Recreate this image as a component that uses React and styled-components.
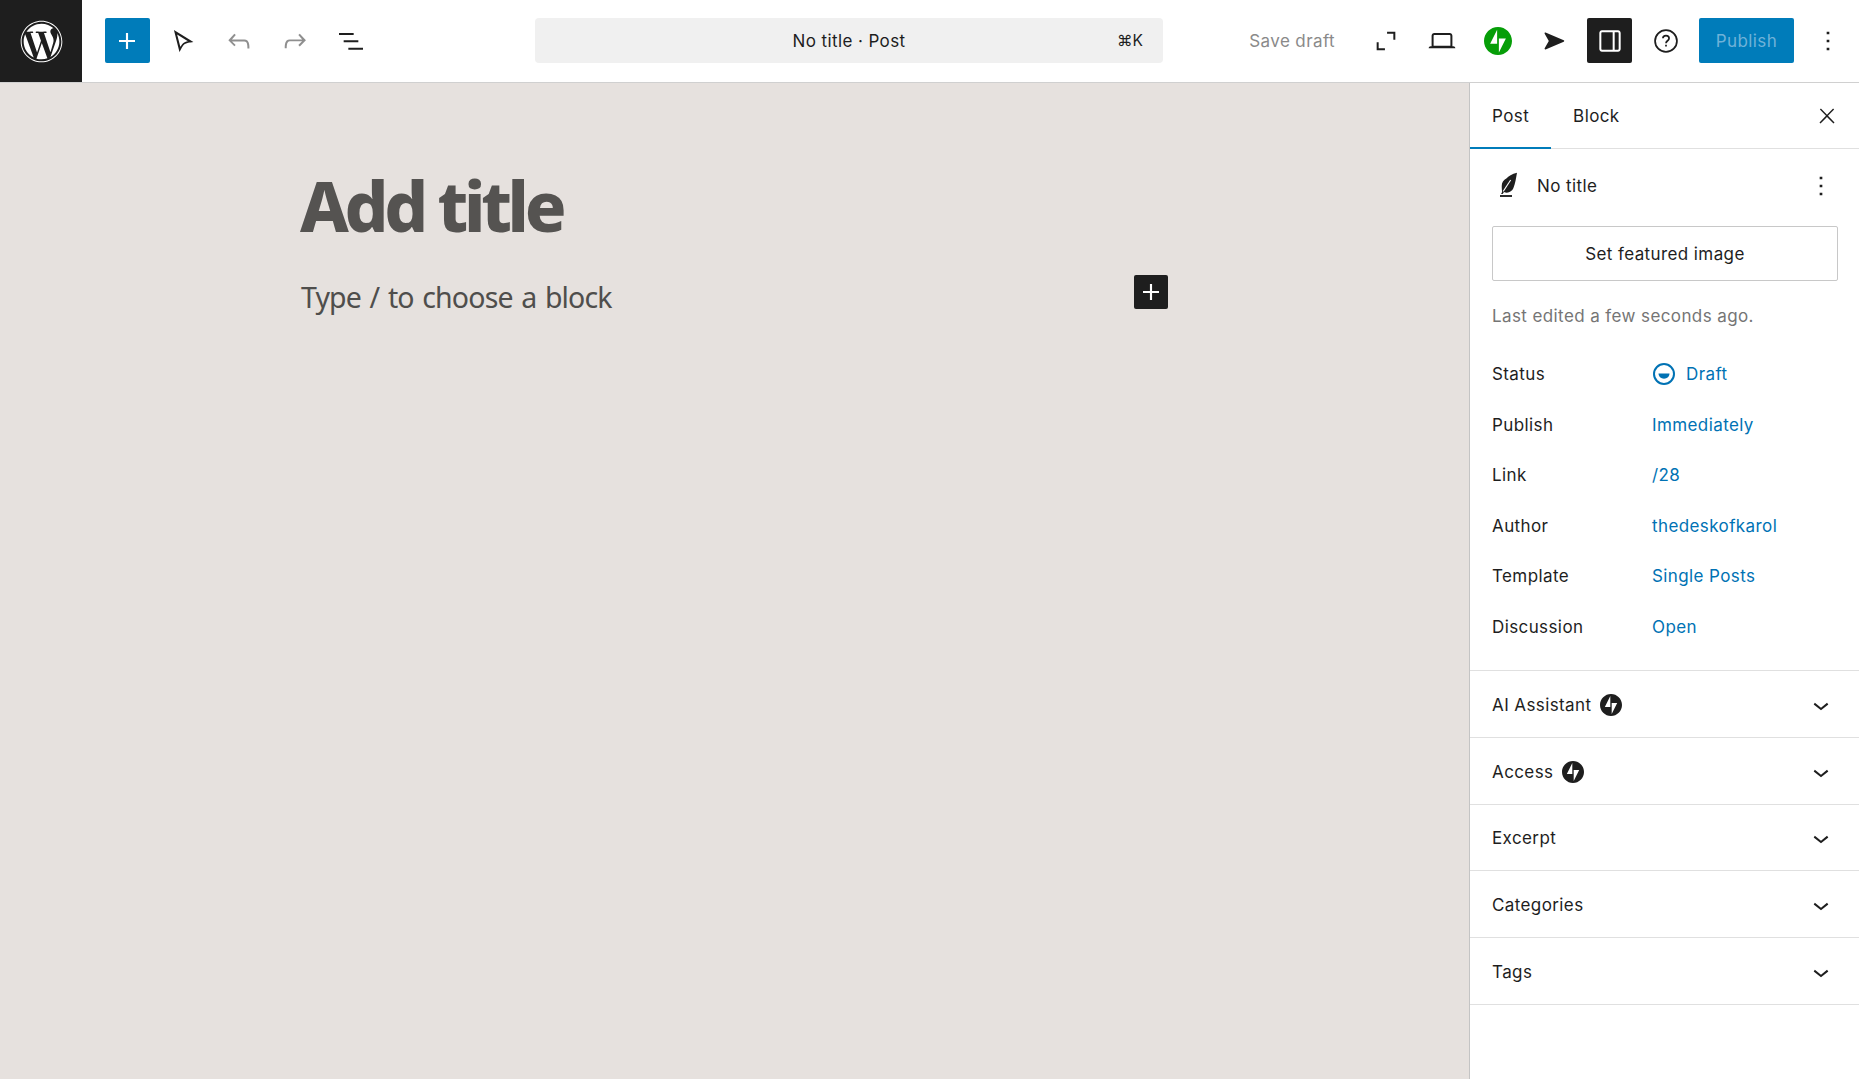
import React from "react";
import styled, { createGlobalStyle } from "styled-components";
import { FaWordpress } from "react-icons/fa";

const GlobalStyle = createGlobalStyle`
  html, body {
    margin: 0;
    padding: 0;
    height: 100%;
    background: #fff;
    font-family: Inter, "Liberation Sans", sans-serif;
    color: #1e1e1e;
  }
  * { box-sizing: border-box; }
`;

const Page = styled.div`
  width: 1859px;
  height: 1079px;
  display: flex;
  flex-direction: column;
  overflow: hidden;
  font-size: 17px;
  letter-spacing: 0.4px;
`;

const TopBar = styled.header`
  height: 83px;
  flex: none;
  display: flex;
  align-items: flex-start;
  justify-content: space-between;
  background: #fff;
  border-bottom: 1px solid #d0d0d0;
  padding-right: 9px;
`;

const ToolGroup = styled.div`
  height: 81px;
  display: flex;
  align-items: center;
  gap: 11px;
`;

const LogoTile = styled.div`
  align-self: flex-start;
  width: 82px;
  height: 82px;
  margin-right: 11.5px;
  background: #1e1e1e;
  color: #fff;
  display: flex;
  align-items: center;
  justify-content: center;
  font-size: 43px;
`;

const IconButton = styled.button`
  width: 45px;
  height: 45px;
  padding: 0;
  border: 0;
  border-radius: 2px;
  display: flex;
  align-items: center;
  justify-content: center;
  background: ${(p) => (p.$fill ? p.$fill : "transparent")};
  color: ${(p) => p.$color || "#1e1e1e"};
`;

const CommandBar = styled.div`
  position: absolute;
  left: 535px;
  top: 18px;
  width: 628px;
  height: 45px;
  border-radius: 4px;
  background: #f0f0f0;
  display: flex;
  align-items: center;
  justify-content: center;
`;

const Shortcut = styled.span`
  position: absolute;
  right: 20px;
  font-size: 15.5px;
  letter-spacing: 0;
`;

const SaveDraft = styled.span`
  color: #8a8a8a;
  margin-right: 17px;
`;

const PublishButton = styled.button`
  width: 95px;
  height: 45px;
  border: 0;
  border-radius: 2px;
  background: #007cba;
  color: #6fb2d8;
  font: inherit;
  letter-spacing: inherit;
  padding: 0;
`;

const Body = styled.div`
  flex: 1;
  display: flex;
  min-height: 0;
`;

const Canvas = styled.main`
  flex: 1;
  background: #e6e1de;
`;

const Column = styled.div`
  width: 869px;
  margin: 82px auto 0;
`;

const Title = styled.h1`
  margin: 0;
  font-family: "Noto Sans", sans-serif;
  font-weight: 800;
  font-size: 69px;
  line-height: 80px;
  letter-spacing: -4.3px;
  color: #555351;
`;

const BlockRow = styled.div`
  display: flex;
  justify-content: space-between;
  align-items: flex-start;
  margin-top: 30px;
`;

const Placeholder = styled.p`
  margin: 2px 0 0 1px;
  font-family: "Noto Sans", sans-serif;
  font-size: 28.5px;
  line-height: 40px;
  letter-spacing: -0.85px;
  word-spacing: 2px;
  color: #4f4e4c;
`;

const InserterButton = styled.button`
  width: 34px;
  height: 34px;
  padding: 0;
  margin-right: 1px;
  border: 0;
  border-radius: 2px;
  background: #1e1e1e;
  color: #fff;
  display: flex;
  align-items: center;
  justify-content: center;
`;

const Sidebar = styled.aside`
  width: 390px;
  flex: none;
  background: #fff;
  border-left: 1px solid #c4c4c4;
`;

const TabBar = styled.div`
  height: 66px;
  display: flex;
  align-items: stretch;
  border-bottom: 1px solid #e0e0e0;
  padding-right: 10px;
`;

const Tab = styled.div`
  padding: 0 22px;
  display: flex;
  align-items: center;
  box-shadow: ${(p) => (p.$active ? "inset 0 -2px 0 #007cba" : "none")};
  margin-bottom: -1px;
`;

const TabClose = styled.div`
  margin-left: auto;
  display: flex;
  align-items: center;
`;

const SummaryPanel = styled.section`
  padding: 0 22px 18px;
  border-bottom: 1px solid #e0e0e0;
`;

const PostHeading = styled.div`
  height: 77px;
  display: flex;
  align-items: center;
  padding-bottom: 3px;
`;

const PostName = styled.span`
  margin-left: 13px;
  flex: 1;
`;

const FeaturedButton = styled.button`
  display: block;
  width: 346px;
  height: 55px;
  padding: 0;
  border: 1px solid #c8c8c8;
  border-radius: 2px;
  background: #fff;
  color: #1e1e1e;
  font: inherit;
  letter-spacing: inherit;
`;

const LastEdited = styled.p`
  margin: 25px 0 23px;
  line-height: 20px;
  color: #757575;
`;

const MetaRow = styled.div`
  height: 50.5px;
  display: flex;
  align-items: center;
`;

const MetaLabel = styled.span`
  width: 160px;
  flex: none;
`;

const MetaValue = styled.span`
  display: flex;
  align-items: center;
  gap: 10px;
  color: #0072b4;
`;

const AccordionRow = styled.div`
  height: 66.8px;
  padding: 2px 22px 0;
  display: flex;
  align-items: center;
  gap: 9px;
  border-bottom: 1px solid #e0e0e0;
`;

const AccordionChevron = styled.span`
  margin-left: auto;
  display: flex;
`;

const Icon = ({ d, size = 32, box = 24, fill = "currentColor" }) => (
  <svg width={size} height={size} viewBox={`0 0 ${box} ${box}`} fill={fill} aria-hidden="true">
    <path d={d} />
  </svg>
);

const paths = {
  plus: "M18 11.2h-5.2V6h-1.6v5.2H6v1.6h5.2V18h1.6v-5.2H18z",
  select:
    "M9.4 20.5L5.2 3.8l14.6 9-2 .3c-.2 0-.4.1-.7.1-.9.2-1.6.3-2.2.5-.8.3-1.4.5-1.8.8-.4.3-.8.8-1.3 1.5-.4.5-.8 1.2-1.2 2l-.3.6-.8 1.4zM7.6 7.1l2.4 9.3c.2-.4.5-.8.7-1.1.6-.8 1.1-1.4 1.6-1.8.5-.4 1.3-.8 2.2-1.1l1.2-.3-8.1-5z",
  undo: "M18.3 11.7c-.6-.6-1.4-.9-2.3-.9H6.7l2.9-3.3-1.1-1-4.5 5L8.5 16l1-1-2.7-2.7H16c.5 0 .9.2 1.3.5 1 1 1 3.4 1 4.5v.3h1.5v-.2c0-1.5 0-4.3-1.5-5.7z",
  redo: "M15.6 6.5l-1.1 1 2.9 3.3H8c-.9 0-1.7.3-2.3.9-1.4 1.5-1.4 4.2-1.4 5.6v.2h1.5v-.3c0-1.1 0-3.5 1-4.5.3-.3.7-.5 1.3-.5h9.2L14.5 15l1.1 1.1 4.6-4.6-4.6-5z",
  list: "M3 6h11v1.5H3V6zm3.5 5.5h11V13h-11v-1.5zM21 17H10v1.5h11V17z",
  fullscreen: "M12.8 5H19v6h-1.5V6.5h-4.7zM5 13h1.5v4.5h4.7V19H5z",
  laptop:
    "M20.5 16h-.7V8c0-1.1-.9-2-2-2H6.2c-1.1 0-2 .9-2 2v8h-.7c-.8 0-1.5.7-1.5 1.5h20c0-.8-.7-1.5-1.5-1.5zM5.7 8c0-.3.2-.5.5-.5h11.6c.3 0 .5.2.5.5v7.6H5.7V8z",
  jetpack: "M16 0C7.2 0 0 7.2 0 16s7.2 16 16 16 16-7.2 16-16S24.8 0 16 0zM15 19H7l8-16v16zm2 10V13h8l-8 16z",
  send: "M4.2 4.2c-.6-.2-1.1.4-.8 1L7.2 12l-3.8 6.8c-.3.6.2 1.2.8 1L21 12.6c.6-.2.6-1 0-1.2z",
  sidebar:
    "M18 4H6c-1.1 0-2 .9-2 2v12c0 1.1.9 2 2 2h12c1.1 0 2-.9 2-2V6c0-1.1-.9-2-2-2zm-4 14.5H6c-.3 0-.5-.2-.5-.5V6c0-.3.2-.5.5-.5h8v13zm4.5-.5c0 .3-.2.5-.5.5h-2.5v-13H18c.3 0 .5.2.5.5v12z",
  more: "M13 19h-2v-2h2v2zm0-6h-2v-2h2v2zm0-6h-2V5h2v2z",
  close: "M13 11.8l6.1-6.3-1-1-6.1 6.2-6.1-6.2-1 1 6.1 6.3-6.5 6.7 1 1 6.5-6.6 6.5 6.6 1-1z",
  chevron: "M17.5 11.6L12 16l-5.5-4.4.9-1.2L12 14l4.5-3.6 1 1.2z",
};

const HelpIcon = () => (
  <svg width="32" height="32" viewBox="0 0 24 24" fill="none" stroke="currentColor" strokeWidth="1.3" aria-hidden="true">
    <circle cx="12" cy="12" r="8.2" />
    <path d="M9.7 10c0-1.4 1-2.1 2.3-2.1s2.3.8 2.3 2c0 1.9-2.3 1.9-2.3 3.8" />
    <path d="M12 14.8v1.4" />
  </svg>
);

const FeatherIcon = () => (
  <svg width="32" height="32" viewBox="0 0 24 24" aria-hidden="true">
    <path
      d="M18.75 2C15 3 12.2 4.5 11 6.2 8.5 7.5 7.3 9.5 7.3 12c0 2 .2 3.5.3 4.5L6.8 18H8l1-1.5c3 1.5 6-.5 7-2.8 1.5-3.7 2-7.7 2.75-11.7z"
      fill="currentColor"
    />
    <path d="M8.4 16L14 7.5" stroke="#fff" strokeWidth="0.8" fill="none" />
    <path d="M6 18.8h9v1.4H6z" fill="currentColor" />
  </svg>
);

const DraftIcon = () => (
  <svg width="24" height="24" viewBox="0 0 24 24" fill="none" aria-hidden="true">
    <circle cx="12" cy="12" r="10" stroke="currentColor" strokeWidth="2" />
    <path d="M6.5 11.5h11c0 3-2.4 5.2-5.5 5.2s-5.5-2.2-5.5-5.2z" fill="currentColor" />
  </svg>
);

const metaRows = [
  ["Status", "Draft"],
  ["Publish", "Immediately"],
  ["Link", "/28"],
  ["Author", "thedeskofkarol"],
  ["Template", "Single Posts"],
  ["Discussion", "Open"],
];

const panels = [
  ["AI Assistant", true],
  ["Access", true],
  ["Excerpt", false],
  ["Categories", false],
  ["Tags", false],
];

export default function App() {
  return (
    <Page>
      <GlobalStyle />
      <TopBar>
        <ToolGroup>
          <LogoTile>
            <FaWordpress />
          </LogoTile>
          <IconButton $fill="#007cba" $color="#fff">
            <Icon d={paths.plus} />
          </IconButton>
          <IconButton>
            <Icon d={paths.select} />
          </IconButton>
          <IconButton $color="#8f8f8f">
            <Icon d={paths.undo} />
          </IconButton>
          <IconButton $color="#8f8f8f">
            <Icon d={paths.redo} />
          </IconButton>
          <IconButton>
            <Icon d={paths.list} />
          </IconButton>
        </ToolGroup>
        <CommandBar>
          No title · Post
          <Shortcut>⌘K</Shortcut>
        </CommandBar>
        <ToolGroup>
          <SaveDraft>Save draft</SaveDraft>
          <IconButton>
            <Icon d={paths.fullscreen} />
          </IconButton>
          <IconButton>
            <Icon d={paths.laptop} />
          </IconButton>
          <IconButton $color="#069e08">
            <Icon d={paths.jetpack} box={32} size={28} />
          </IconButton>
          <IconButton>
            <Icon d={paths.send} size={26} />
          </IconButton>
          <IconButton $fill="#1e1e1e" $color="#fff">
            <Icon d={paths.sidebar} />
          </IconButton>
          <IconButton>
            <HelpIcon />
          </IconButton>
          <PublishButton>Publish</PublishButton>
          <IconButton>
            <Icon d={paths.more} />
          </IconButton>
        </ToolGroup>
      </TopBar>
      <Body>
        <Canvas>
          <Column>
            <Title>Add title</Title>
            <BlockRow>
              <Placeholder>Type / to choose a block</Placeholder>
              <InserterButton>
                <Icon d={paths.plus} />
              </InserterButton>
            </BlockRow>
          </Column>
        </Canvas>
        <Sidebar>
          <TabBar>
            <Tab $active>Post</Tab>
            <Tab>Block</Tab>
            <TabClose>
              <IconButton>
                <Icon d={paths.close} size={24} />
              </IconButton>
            </TabClose>
          </TabBar>
          <SummaryPanel>
            <PostHeading>
              <FeatherIcon />
              <PostName>No title</PostName>
              <Icon d={paths.more} />
            </PostHeading>
            <FeaturedButton>Set featured image</FeaturedButton>
            <LastEdited>Last edited a few seconds ago.</LastEdited>
            {metaRows.map(([label, value]) => (
              <MetaRow key={label}>
                <MetaLabel>{label}</MetaLabel>
                <MetaValue>
                  {label === "Status" && <DraftIcon />}
                  {value}
                </MetaValue>
              </MetaRow>
            ))}
          </SummaryPanel>
          {panels.map(([label, badge]) => (
            <AccordionRow key={label}>
              {label}
              {badge && <Icon d={paths.jetpack} box={32} size={22} />}
              <AccordionChevron>
                <Icon d={paths.chevron} />
              </AccordionChevron>
            </AccordionRow>
          ))}
        </Sidebar>
      </Body>
    </Page>
  );
}
